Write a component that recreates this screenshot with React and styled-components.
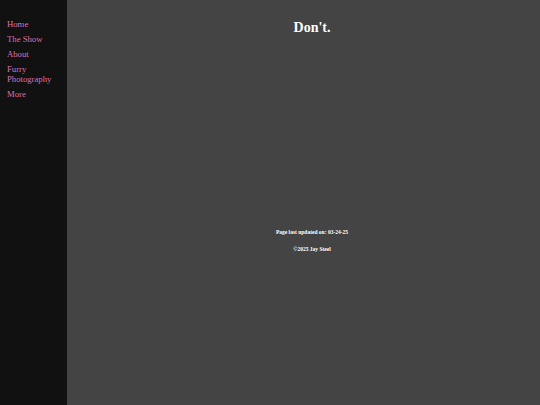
import React from "react";
import styled, { createGlobalStyle } from "styled-components";

const Global = createGlobalStyle`
  html, body, #root {
    margin: 0;
    height: 100%;
  }
  body {
    font-family: "Liberation Serif", "Times New Roman", serif;
    background: #444444;
  }
`;

const Layout = styled.div`
  display: flex;
  height: 100%;
  min-height: 405px;
`;

const Sidebar = styled.nav`
  width: 67px;
  flex-shrink: 0;
  background: #111111;
  padding: 19px 0 0 7px;
  box-sizing: border-box;
  display: flex;
  flex-direction: column;
  gap: 5px;
`;

const NavLink = styled.a`
  color: #dd6fb0;
  font-size: 8.7px;
  line-height: 10px;
  text-decoration: none;
`;

const Main = styled.main`
  flex: 1;
  padding: 19px 0 0 17px;
  color: #ffffff;
  text-align: center;
`;

const Title = styled.h1`
  margin: 0;
  font-size: 14px;
  font-weight: bold;
  line-height: 17px;
`;

const Footer = styled.div`
  margin-top: 193px;
  display: flex;
  flex-direction: column;
  gap: 11px;
  font-size: 5.5px;
  font-weight: bold;
  line-height: 6px;
`;

const links = ["Home", "The Show", "About", "Furry Photography", "More"];

export default function App() {
  return (
    <>
      <Global />
      <Layout>
        <Sidebar>
          {links.map((l) => (
            <NavLink key={l} href="#">
              {l}
            </NavLink>
          ))}
        </Sidebar>
        <Main>
          <Title>Don't.</Title>
          <Footer>
            <span>Page last updated on: 03-24-25</span>
            <span>©2025 Jay Steel</span>
          </Footer>
        </Main>
      </Layout>
    </>
  );
}
